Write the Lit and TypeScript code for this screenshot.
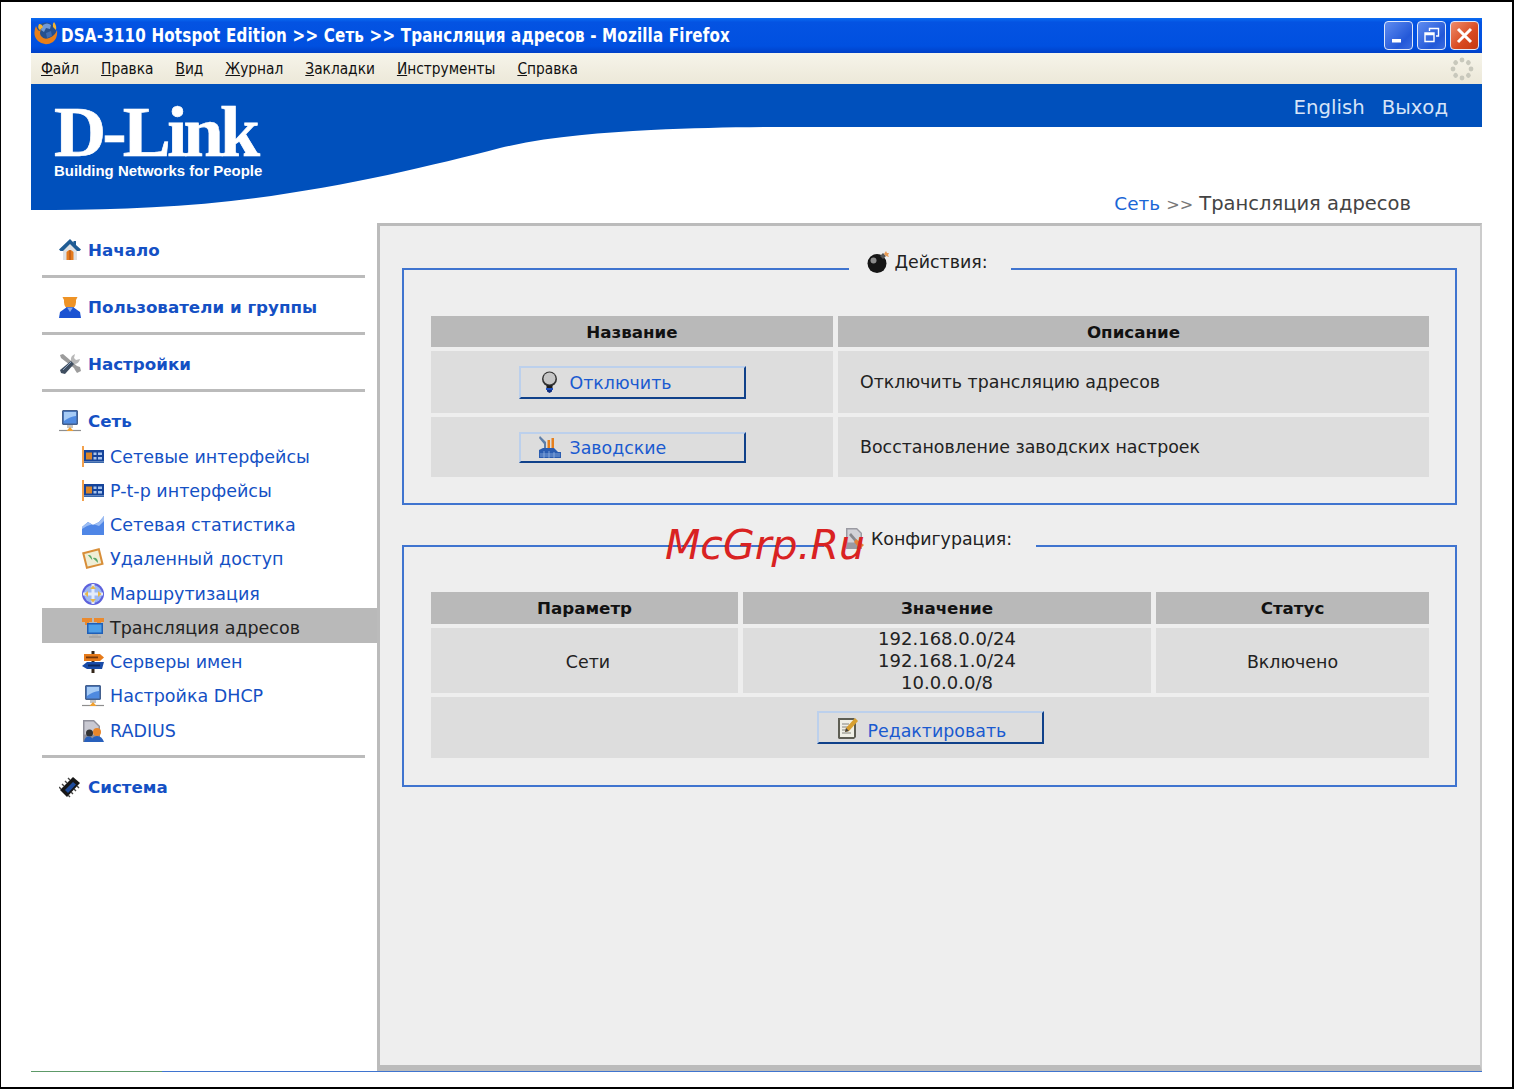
import { LitElement, html, css, svg } from "lit";
import { customElement } from "lit/decorators.js";

const ic = (body: unknown, vb = "0 0 22 22") =>
  html`<svg class="ico" viewBox=${vb} aria-hidden="true">${body}</svg>`;

const monitor = svg`
  <path d="M4 0h14l1 1v13l-1 1H4l-1-1V1z" fill="#44608e"/>
  <path d="M4.500 1.500h13v12h-13z" fill="#4f8ae0"/>
  <path d="M5 2h12v4q-6 .5-12 5z" fill="#a6cbf5"/>
  <path d="M8 15h6v3H8z" fill="#c4c4c4"/>
  <path d="M0 20.500h22" stroke="#8e8e8e" stroke-width="1.200"/>
  <path d="M7.500 21l3.500-4 3.500 4z" fill="#f0a030"/>`;
const nic = svg`
  <path d="M1 0v21" stroke="#f08a20" stroke-width="1.600"/>
  <path d="M2 4h20v11.500H2z" fill="#15449a"/>
  <path d="M2 15.500h20v1.500H2z" fill="#3a68ac"/>
  <path d="M4 6.500h6v7H4z" fill="#d8842a"/>
  <path d="M11.500 6.500h3v2.500h-3zM16 6.500h4V9h-4zM11.500 11h3v2.500h-3zM16 11h4v2.500h-4z" fill="#a8c4ec"/>`;

const ICONS: Record<string, unknown> = {
  home: ic(svg`
    <path d="M11 0 0 10.500l1.500 1.500H4v9h14v-9h2.500l1.500-1.500L17 6V2h-2.500v1.500L11 0z" fill="#1f5c94"/>
    <path d="M4 12 11 5l7 7v9H4z" fill="#dfe2e4"/>
    <path d="M7.500 13q3.500-4 7 0v8h-7z" fill="#e57c1e"/>
    <path d="M10.500 11h1v10h-1z" fill="#a84c10"/>`),
  user: ic(svg`
    <path d="M3.500 1h15l-1.500 3q.5 5-2.500 8h-7Q4.500 9 5 4z" fill="#ee9326"/>
    <path d="M8 11h6l7 5 1 6H0l1-6z" fill="#1a52d2"/>
    <path d="M8 11.500h6L11 16z" fill="#85a8ea"/>`),
  tools: ic(svg`
    <path d="M1 2l3-1 14 12 3 1 1 4-4 2-2-3-1-2L2 5z" fill="#9c9c9c"/>
    <path d="M12 8q-1-5 4-7l-1 4 2 2 4-1q-1 5-6 5z" fill="#b8b8b8"/>
    <path d="M12 8l3 3-9 10-4-1-1-3z" fill="#3f4e60"/>
    <path d="M4 17l8-8" stroke="#8aa0bc" stroke-width="1"/>`),
  monitor: ic(monitor),
  nic: ic(nic),
  chart: ic(svg`
    <path d="M0 21v-8l6-5 5 3 6-3 5-6v19z" fill="#4f86e6"/>
    <path d="M0 13l6-5 5 3 6-3 5-6v5l-5 5-6-2-6 2-5 3z" fill="#9dbdf2"/>`),
  remote: ic(svg`
    <g transform="rotate(-14 11 11)">
      <path d="M2 2h18v17H2z" fill="#d88e38"/>
      <path d="M4 4h14v13H4z" fill="#efeed6"/>
      <path d="M7 6q4 0 3 6zM11 10q5 0 4 6z" fill="#5aa968"/>
    </g>`),
  route: ic(svg`
    <circle cx="11" cy="11" r="11" fill="#5c60dc"/>
    <circle cx="11" cy="11" r="9" fill="#9db8f2"/>
    <path d="M9.500 1h3v20h-3zM1 9.500h20v3H1z" fill="#e4ecfb"/>
    <path d="M11 2.500l3 3.500H8zM11 19.500 8 16h6zM2.500 11 6 8v6zM19.500 11 16 14V8z" fill="#e6b74c"/>`),
  nat: ic(svg`
    <path d="M0 1h10v4H7v3H3V5H0zM12 1h10v4h-3v3h-4V5h-3z" fill="#ea8a2e"/>
    <path d="M5 6h16v11H5z" fill="#1f5fb6"/>
    <path d="M6.500 7.500h13v8h-13z" fill="#4d9fe8"/>
    <path d="M10 17h6v2h-6z" fill="#b0b0b0"/>
    <path d="M7 20h12" stroke="#9a9a9a" stroke-width="1.200"/>`),
  dns: ic(svg`
    <path d="M9.500 0h3v22h-3z" fill="#33261a"/>
    <path d="M2 3h16l4 3.500L18 10H2z" fill="#e67a1a"/>
    <path d="M4 5.500h12v1.800H4z" fill="#74360a"/>
    <path d="M0 15l5-4h17l-2 7H5z" fill="#1a4ca8"/>
    <path d="M6 13.500h12v2H6z" fill="#0c2860"/>`),
  radius: ic(svg`
    <path d="M1 0h11l6 6v16H1z" fill="#8f8f9a"/>
    <path d="M2.500 1.500h9l5 5v8h-14z" fill="#c9c9d2"/>
    <circle cx="15" cy="12" r="4" fill="#e8862a"/>
    <circle cx="7.500" cy="13" r="3.500" fill="#333"/>
    <path d="M2 22q1-6 5-5.500t5 5.500zM9 22q1-6 6-6t7 6z" fill="#2860bc"/>`),
  chip: ic(svg`
    <path d="M1 14 14 1l7 6L8 21z" fill="#161616"/>
    <path d="M6 14 14 6l3 2.500L9 17z" fill="#1d4a9a"/>
    <path d="M0 11l2 2M3 8l2 2M6 5l2 2M9 2l2 2M11 21l-2-2M14 18l-2-2M17 15l-2-2M20 12l-2-2" stroke="#444" stroke-width="1.400"/>`),
  bomb: ic(svg`
    <circle cx="10" cy="12.500" r="9.500" fill="#161616"/>
    <circle cx="6.500" cy="9.500" r="3" fill="#8c8c8c"/>
    <path d="M13 5l3-3 3 3-3 3z" fill="#555"/>
    <path d="m17 3 2-3 1 2 2 0-1 2 1 2-3-1z" fill="#e89a54"/>`),
  config: ic(svg`
    <path d="M3 0h11l5 5v16H3z" fill="#9a9aa2"/>
    <path d="M4.500 1.500h9l4 4v9h-13z" fill="#d2d2d8"/>
    <path d="m8 5 6 7-2 2-6-7z" fill="#88888e"/>
    <path d="m13 11 8 6-4 4-6-7z" fill="#e0813a"/>`),
  bulb: ic(svg`
    <circle cx="10.500" cy="8" r="7.500" fill="#333"/>
    <circle cx="10.500" cy="7.500" r="6" fill="#c6c6c6"/>
    <path d="M7.500 14.500h6V17h-6z" fill="#1c1c1c"/>
    <path d="M7 17h7v2H7z" fill="#1c4fc0"/>
    <path d="M8 19h5v1.500L10.500 22 8 20.500z" fill="#0e2d80"/>`),
  factory: ic(svg`
    <path d="M1 0l6 6v7H5V8L0 2z" fill="#5e7ea8"/>
    <path d="M8.500 4h2.500v9H8.500zM12.500 2H15v11h-2.500z" fill="#e6801e"/>
    <path d="M0 14l4-2h11l4 4h3v6H0z" fill="#2a5cb0"/>
    <path d="M1 18h20M1 20h20M5 15v7M10 15v7M15 16v6" stroke="#9dbbe8" stroke-width=".7"/>`),
  edit: ic(svg`
    <path d="M1 1h16l2 2v17l-2 2H2l-1-1z" fill="#5e5e54"/>
    <path d="M3 3h14v17H3z" fill="#f0f0e6"/>
    <path d="M5 7h7M5 10h6M5 13h5M5 16h9" stroke="#a8a8a0" stroke-width="1.300"/>
    <path d="m18 1 3 3-9 10-4 1 1-4z" fill="#d8a030"/>
    <path d="m9 11 3 3-4 1z" fill="#444"/>`),
};

const SUBS: [string, string][] = [
  ["nic", "Сетевые интерфейсы"],
  ["nic", "P-t-p интерфейсы"],
  ["chart", "Сетевая статистика"],
  ["remote", "Удаленный доступ"],
  ["route", "Маршрутизация"],
  ["nat", "Трансляция адресов"],
  ["dns", "Серверы имен"],
  ["monitor", "Настройка DHCP"],
  ["radius", "RADIUS"],
];

@customElement("app-root")
export class AppRoot extends LitElement {
  static styles = css`
    :host {
      display: block;
      font-family: "DejaVu Sans", sans-serif;
    }
    .page {
      position: relative;
      box-sizing: border-box;
      width: 1514px;
      height: 1089px;
      background: #fff;
      border: solid #000;
      border-width: 2px 2px 2px 1px;
      padding: 16px 29px 0 30px;
    }
    .win {
      display: flex;
      flex-direction: column;
      width: 1451px;
      height: 1054px;
      box-sizing: border-box;
      border-bottom: 1px solid;
      border-image: linear-gradient(to right, #5d9a68 132px, #3f74cf 132px) 1;
    }
    .ico {
      display: block;
      width: 22px;
      height: 22px;
      flex: none;
    }

    .title {
      display: flex;
      align-items: center;
      height: 35px;
      flex: none;
      background: linear-gradient(#0a6cf2 0, #0453e2 12%, #0050e0 80%, #0040c8 100%);
      color: #fff;
    }
    .fox {
      width: 25px;
      height: 25px;
      margin: -4px 3px 0 2px;
      flex: none;
    }
    .title-text {
      font: bold 19.500px "DejaVu Sans Condensed", sans-serif;
      white-space: nowrap;
      flex: 1;
      letter-spacing: 0.2px;
      transform: scaleX(0.863);
      transform-origin: left center;
    }
    .btns {
      display: flex;
      gap: 4px;
      padding-right: 3px;
    }
    .wbtn {
      box-sizing: border-box;
      width: 29px;
      height: 29px;
      border: 1.500px solid #dfe8fa;
      border-radius: 4px;
      background: linear-gradient(135deg, #5f8cf0, #2358d8 70%, #3a6ce0);
      display: flex;
      align-items: center;
      justify-content: center;
    }
    .wbtn.close {
      background: linear-gradient(135deg, #ee8d6c, #d8481f 60%, #c43a14);
    }
    .wbtn svg {
      width: 21px;
      height: 21px;
      display: block;
    }

    .menu {
      display: flex;
      align-items: center;
      gap: 22px;
      flex: none;
      height: 31px;
      padding: 0 8px 0 10px;
      background: linear-gradient(#f6f4ea, #ece8d8);
      font: 15.300px "DejaVu Sans Condensed", sans-serif;
      color: #111;
      box-sizing: border-box;
    }
    .menu .thr {
      margin-left: auto;
      width: 24px;
      height: 24px;
    }

    .head {
      position: relative;
      flex: none;
      height: 139px;
      display: flex;
      justify-content: space-between;
    }
    .curve {
      position: absolute;
      inset: 0;
      width: 1451px;
      height: 139px;
    }
    .logo {
      position: relative;
      padding: 19px 0 0 23px;
      color: #fff;
    }
    .logo-mark {
      font: bold 72px/58px "Liberation Serif", serif;
      letter-spacing: -3.600px;
      -webkit-text-stroke: 0.7px #fff;
    }
    .logo-sub {
      font: bold 14.950px/20px "Liberation Sans", sans-serif;
    }
    .hright {
      position: relative;
      display: flex;
      flex-direction: column;
      justify-content: space-between;
      align-items: flex-end;
      padding: 12px 0 6px;
    }
    .links {
      display: flex;
      gap: 17px;
      padding-right: 34px;
      color: #d6e4f8;
      font-size: 19.700px;
      line-height: 24px;
    }
    .crumb {
      padding-right: 71px;
      font-size: 19.500px;
      line-height: 24px;
      color: #444;
    }
    .crumb a {
      color: #1a66d6;
      font-size: 18.400px;
    }
    .crumb span {
      color: #777;
      font-size: 16px;
    }

    .body {
      flex: 1;
      display: grid;
      grid-template-columns: 346px 1105px;
      min-height: 0;
    }
    .side {
      padding: 10px 0 0 11px;
      color: #1450c4;
    }
    .sec {
      padding: 12px 0 8px;
      margin-right: 12px;
      border-bottom: 3px solid #bbb;
    }
    .sec:first-child {
      padding-top: 0;
    }
    .sec:last-child {
      border-bottom: 0;
    }
    .h {
      display: flex;
      align-items: center;
      gap: 7px;
      height: 34px;
      padding-left: 17px;
      font-size: 16.700px;
      font-weight: bold;
    }
    .subs {
      margin: -1px -12px 2px 0;
    }
    .sub {
      box-sizing: border-box;
      display: flex;
      align-items: center;
      gap: 6px;
      height: 34.250px;
      padding: 5px 0 0 40px;
      font-size: 17.500px;
      white-space: nowrap;
    }
    .sub.on {
      background: #b9b9b9;
      color: #222;
    }

    .panel {
      box-sizing: border-box;
      background: #eee;
      border: solid #bbb;
      border-width: 3px 2px 6px 3px;
      border-right-color: #ccc;
      padding: 25px 23px 0 22px;
      display: flex;
      flex-direction: column;
      gap: 23px;
      color: #222;
      font-size: 17.400px;
    }
    fieldset {
      margin: 0;
      border: 2px solid #3f74cf;
      padding: 29px 26px 26px 27px;
      min-width: 0;
    }
    legend {
      margin: 0 auto;
      display: flex;
      align-items: center;
      line-height: 22px;
      padding: 0 23px 14px 18px;
      gap: 5px;
    }
    .f2 legend {
      padding: 0 24px 14px 19px;
      gap: 6px;
    }
    .f2 {
      padding-top: 28px;
      padding-bottom: 27px;
    }
    .grid {
      display: grid;
      gap: 4px 5px;
      text-align: center;
    }
    .g1 {
      grid-template-columns: 402px 591px;
      grid-template-rows: 31px 62px 60px;
    }
    .g2 {
      grid-template-columns: 307px 408px 273px;
      grid-template-rows: 32px 65px 61px;
    }
    .th,
    .td {
      display: flex;
      align-items: center;
      justify-content: center;
    }
    .th {
      background: #b9b9b9;
      color: #111;
      font-weight: bold;
      font-size: 16.700px;
    }
    .td {
      background: #ddd;
    }
    .td.left {
      justify-content: flex-start;
      padding-left: 22px;
    }
    .td.lines {
      flex-direction: column;
      line-height: 22px;
      font-size: 18px;
    }
    .td.low {
      padding-top: 2px;
    }
    .td.shift {
      padding: 2px 0 0 7px;
    }
    .td.wide {
      grid-column: 1 / -1;
    }
    .btn {
      box-sizing: border-box;
      width: 227px;
      height: 33px;
      display: flex;
      align-items: center;
      gap: 9px;
      padding-left: 18px;
      border: 2px solid;
      border-color: #bcd0ec #10418a #10418a #bcd0ec;
      color: #1a5ad0;
      background: #ddd;
    }
    .btn span {
      padding-top: 2px;
    }
    .btn.short {
      height: 31px;
    }
    .btn.edit span {
      padding-top: 6px;
    }
    .mark {
      position: absolute;
      left: 664px;
      top: 518px;
      font: italic 41px/50px "DejaVu Sans", sans-serif;
      color: #d92222;
      white-space: nowrap;
    }
  `;

  render() {
    return html`
      <div class="page">
        <div class="win">
          <div class="title">
            <svg class="fox" viewBox="0 0 25 25" aria-hidden="true">
              <circle cx="13" cy="11.500" r="10" fill="#26508f"/>
              <path d="M10 4q4-3 8 0l-1 4-4-1-2 4-3-2z" fill="#6f9ad8"/>
              <path d="M13 12l5-2 1 5-5 2z" fill="#3f6cb4"/>
              <path d="M3 5Q-1 14 5 20q7 6 15 1 5-4 4-12-2 6-8 8-5 2-8-2-2-3 0-6l-2 1Q4 9 3 5z" fill="#ea7f18"/>
              <path d="M6 3q3 0 4 3L7 9Q4 7 6 3zM21 1q3 4 2 8l-3-3q-1-3 1-5z" fill="#f6b52f"/>
            </svg>
            <div class="title-text">DSA-3110 Hotspot Edition &gt;&gt; Сеть &gt;&gt; Трансляция адресов - Mozilla Firefox</div>
            <div class="btns">
              <div class="wbtn">
                <svg viewBox="0 0 21 21" aria-hidden="true"><path d="M4 14h9v3.500H4z" fill="#fff"/></svg>
              </div>
              <div class="wbtn">
                <svg viewBox="0 0 21 21" aria-hidden="true"><path d="M8.500 6V3.500h9V11H15M4 8h9v8.500H4z M4 9.500h9" fill="none" stroke="#fff" stroke-width="1.400"/></svg>
              </div>
              <div class="wbtn close">
                <svg viewBox="0 0 21 21" aria-hidden="true"><path d="m4 4 13 13M17 4 4 17" stroke="#fff" stroke-width="3"/></svg>
              </div>
            </div>
          </div>
          <div class="menu">
            <span><u>Ф</u>айл</span><span><u>П</u>равка</span><span><u>В</u>ид</span><span><u>Ж</u>урнал</span><span><u>З</u>акладки</span><span><u>И</u>нструменты</span><span><u>С</u>правка</span>
            <svg class="thr" viewBox="0 0 24 24" aria-hidden="true">
              ${[0, 45, 90, 135, 180, 225, 270, 315].map(
                (a) => svg`<circle cx="12" cy="3" r="2.400" fill="#c8c8bc" transform="rotate(${a} 12 12)"/>`
              )}
            </svg>
          </div>
          <div class="head">
            <svg class="curve" viewBox="0 0 1451 139" preserveAspectRatio="none" aria-hidden="true">
              <path d="M0 0H1451V43H760C710 43 670 44 620 46C569 49 520 52 469 64C400 82 300 106 200 117C129 125 60 126 0 126Z" fill="#0050bc"/>
            </svg>
            <div class="logo">
              <div class="logo-mark">D-Link</div>
              <div class="logo-sub">Building Networks for People</div>
            </div>
            <div class="hright">
              <div class="links"><span>English</span><span>Выход</span></div>
              <div class="crumb"><a>Сеть</a> <span>&gt;&gt;</span> Трансляция адресов</div>
            </div>
          </div>
          <div class="body">
            <nav class="side">
              <div class="sec"><div class="h">${ICONS.home}Начало</div></div>
              <div class="sec"><div class="h">${ICONS.user}Пользователи и группы</div></div>
              <div class="sec"><div class="h">${ICONS.tools}Настройки</div></div>
              <div class="sec">
                <div class="h">${ICONS.monitor}Сеть</div>
                <div class="subs">
                  ${SUBS.map(
                    ([i, t]) => html`<div class="sub ${t === "Трансляция адресов" ? "on" : ""}">${ICONS[i]}${t}</div>`
                  )}
                </div>
              </div>
              <div class="sec"><div class="h">${ICONS.chip}Система</div></div>
            </nav>
            <main class="panel">
              <fieldset>
                <legend>${ICONS.bomb}Действия:</legend>
                <div class="grid g1">
                  <div class="th">Название</div>
                  <div class="th">Описание</div>
                  <div class="td"><div class="btn">${ICONS.bulb}<span>Отключить</span></div></div>
                  <div class="td left">Отключить трансляцию адресов</div>
                  <div class="td"><div class="btn short">${ICONS.factory}<span>Заводские</span></div></div>
                  <div class="td left">Восстановление заводских настроек</div>
                </div>
              </fieldset>
              <fieldset class="f2">
                <legend>${ICONS.config}Конфигурация:</legend>
                <div class="grid g2">
                  <div class="th">Параметр</div>
                  <div class="th">Значение</div>
                  <div class="th">Статус</div>
                  <div class="td shift">Сети</div>
                  <div class="td lines"><div>192.168.0.0/24</div><div>192.168.1.0/24</div><div>10.0.0.0/8</div></div>
                  <div class="td low">Включено</div>
                  <div class="td wide"><div class="btn edit">${ICONS.edit}<span>Редактировать</span></div></div>
                </div>
              </fieldset>
            </main>
          </div>
        </div>
        <div class="mark">McGrp.Ru</div>
      </div>
    `;
  }
}
